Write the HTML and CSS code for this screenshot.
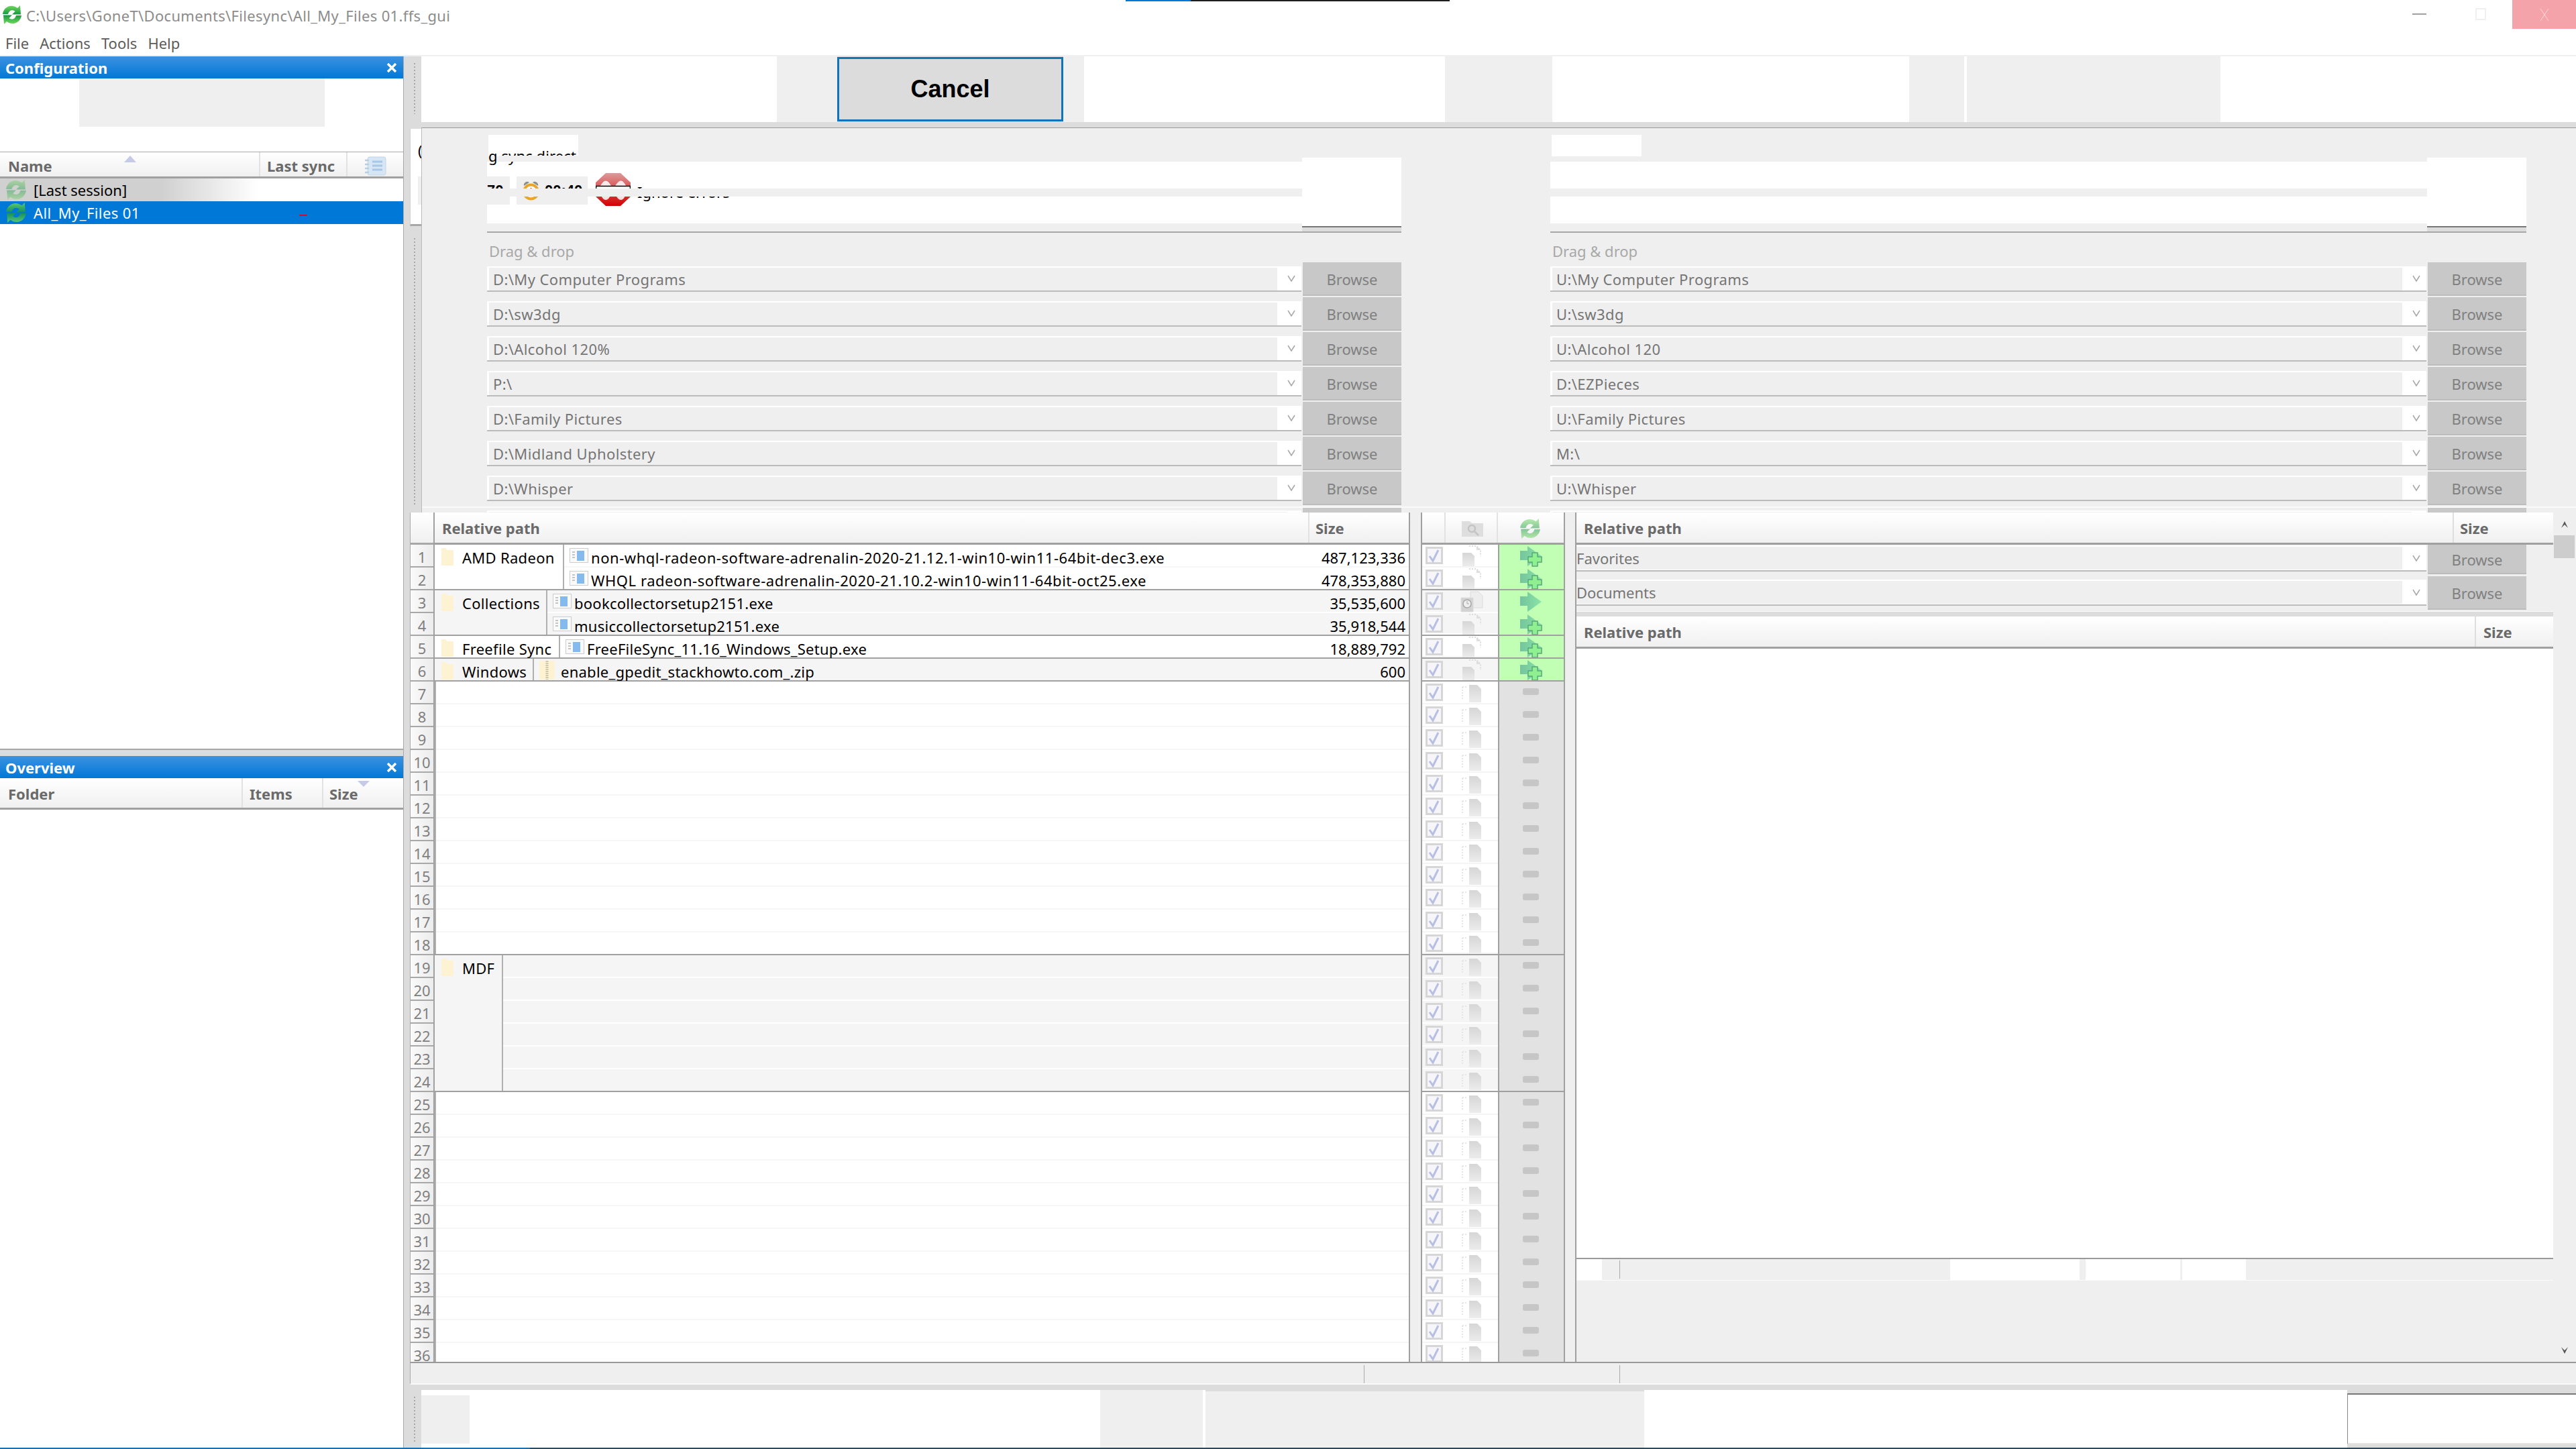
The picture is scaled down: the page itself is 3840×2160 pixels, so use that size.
FILE: index.html
```html
<!DOCTYPE html>
<html lang="en">
  <head>
    <meta charset="UTF-8" />
    <title>All_My_Files 01.ffs_gui</title>
    <link rel="stylesheet" href="styles.css">
  </head>

  <body>
    <svg class="defs" aria-hidden="true">
      <defs>
        <linearGradient id="g-sync" x1="0" y1="0" x2="0" y2="1"><stop offset="0" stop-color="#74dc5e"/><stop offset="1" stop-color="#17963f"/></linearGradient>
        <linearGradient id="g-arrow" x1="0" y1="0" x2="1" y2="0"><stop offset="0" stop-color="#74c49c"/><stop offset="1" stop-color="#8ae4a8"/></linearGradient>
        <linearGradient id="g-doc" x1="0" y1="0" x2="0" y2="1"><stop offset="0" stop-color="#d6d6d6"/><stop offset="1" stop-color="#ececec"/></linearGradient>
        <linearGradient id="g-stop" x1="0" y1="0" x2="0" y2="1"><stop offset="0" stop-color="#dc9a9a"/><stop offset="1" stop-color="#d40000"/></linearGradient>
      </defs>
      <symbol id="sync" viewBox="0 0 30 30">
        <path fill="url(#g-sync)" d="M1 14C2 6 9 1 16 2c3 .4 5 1.500 7 3l4-4 1 13.500H15l4.500-4.500c-4-3-9-2-10.500 4z"/>
        <path fill="url(#g-sync)" transform="rotate(180 15 15)" d="M1 14C2 6 9 1 16 2c3 .4 5 1.500 7 3l4-4 1 13.500H15l4.500-4.500c-4-3-9-2-10.500 4z"/>
      </symbol>
      <symbol id="check" viewBox="0 0 36 34">
        <rect x="6.500" y="4.500" width="23" height="23" fill="#f5f5fa" stroke="#d6d6d6" stroke-width="3"/>
        <path d="M11 17l5 7 8-16" fill="none" stroke="#b7bfe2" stroke-width="3"/>
      </symbol>
      <symbol id="act-new" viewBox="0 0 211 34">
        <use href="#check" width="36" height="34"/>
        <path d="M70 2h11l6 6v9" fill="none" stroke="#dcdcdc" stroke-dasharray="2 2" stroke-width="2"/>
        <path d="M81 2l6 6h-6z" fill="#dedede"/>
        <path d="M60 12h13l5 5v15H60z" fill="url(#g-doc)"/>
        <path d="M146 9h11V2l21 15-21 15v-9h-11z" fill="url(#g-arrow)"/>
        <path d="M164 12h8v6h6v8h-6v6h-8v-6h-6v-8h6z" fill="#8ff08f" stroke="#5aa77c" stroke-width="1.500"/>
      </symbol>
      <symbol id="act-upd" viewBox="0 0 211 34">
        <use href="#check" width="36" height="34"/>
        <path d="M72 2h12l6 6v18H72z" fill="#ededed" stroke="#dcdcdc"/>
        <path d="M58 11h18v21H58z" fill="#d2d2d2" stroke="#dedede"/>
        <circle cx="67" cy="20" r="6" fill="#eee" stroke="#a8a8a8" stroke-width="1.500"/>
        <path d="M67 16v4h3" fill="none" stroke="#a8a8a8"/>
        <path d="M146 9h11V2l21 15-21 15v-9h-11z" fill="url(#g-arrow)"/>
      </symbol>
      <symbol id="act-none" viewBox="0 0 211 34">
        <use href="#check" width="36" height="34"/>
        <path d="M60 8h8m-8 0v18" fill="none" stroke="#e6e6e6" stroke-dasharray="2 2" stroke-width="2"/>
        <path d="M70 5h12l6 6v20H70z" fill="url(#g-doc)"/>
        <rect x="150" y="10" width="24" height="10" rx="3" fill="#c6c6c6"/>
      </symbol>
      <symbol id="folder" viewBox="0 0 18 26">
        <path d="M0 0h6l3 3h9v23H0z" fill="#fdf3d2"/>
      </symbol>
      <symbol id="exe" viewBox="0 0 28 22">
        <rect x=".5" y=".5" width="27" height="21" fill="#fafafa" stroke="#cdcdcd"/>
        <rect x="11" y="4" width="11" height="15" fill="#84baee"/>
        <path d="M4 6h4M4 10h4M4 14h4" stroke="#c4c4c4" stroke-width="2"/>
      </symbol>
      <symbol id="zip" viewBox="0 0 23 28">
        <path d="M0 0h23v28H0z" fill="#fdf3d2"/>
        <path d="M11.500 0v28" stroke="#cfc8ac" stroke-width="4" stroke-dasharray="2 1"/>
      </symbol>
      <symbol id="panel-close" viewBox="0 0 16 14">
        <path d="M2 1l12 12M14 1L2 13" stroke="#fff" stroke-width="3.500" fill="none"/>
      </symbol>
      <symbol id="chevron" viewBox="0 0 14 12">
        <path d="M2 2l5 8 5-8" fill="none" stroke="#a8a8a8" stroke-width="1.500"/>
      </symbol>
    </svg>

    <header class="titlebar">
      <svg class="app-icon"><use href="#sync"/></svg>
      <span class="title-text">C:\Users\GoneT\Documents\Filesync\All_My_Files 01.ffs_gui</span>
      <div class="progress-mark"></div>
      <div class="win-min"></div>
      <div class="win-max"></div>
      <div class="win-close">
        <svg viewBox="0 0 14 18"><path d="M1 0l12 18M13 0L1 18" stroke="#fbd5d8" stroke-width="1" fill="none"/></svg>
      </div>
    </header>
    <nav class="menubar">
      <span>File</span>
      <span>Actions</span>
      <span>Tools</span>
      <span>Help</span>
    </nav>

    <div class="workspace">
      <aside class="side">
        <section class="config-panel">
          <div class="panel-title">Configuration<svg class="panel-x"><use href="#panel-close"/></svg></div>
          <div class="config-tools"><div class="config-chip"></div></div>
          <div class="side-head config-head">
            <div class="head-name">Name<i class="sort-up"></i></div>
            <div class="head-sync">Last sync</div>
            <div class="head-note">
              <svg viewBox="0 0 32 29" width="32" height="29">
                <rect x="4" y="1" width="27" height="27" rx="3" fill="#d6e6f4" stroke="#c2d6e6"/>
                <path d="M11 8h15M11 14h15M11 20h15" stroke="#a6c8e6" stroke-width="3"/>
                <path d="M0 6h6M0 12h6M0 18h6M0 24h6" stroke="#b8cfe2" stroke-width="2.500"/>
              </svg>
            </div>
          </div>
          <div class="cfg-row cfg-last"><svg class="cfg-icon cfg-faded"><use href="#sync"/></svg>[Last session]</div>
          <div class="cfg-row cfg-current"><svg class="cfg-icon cfg-soft"><use href="#sync"/></svg>All_My_Files 01<i class="red-dash"></i></div>
        </section>
        <section class="overview-panel">
          <div class="panel-title">Overview<svg class="panel-x"><use href="#panel-close"/></svg></div>
          <div class="side-head overview-head">
            <div class="head-folder">Folder</div>
            <div class="head-items">Items</div>
            <div class="head-size">Size<i class="sort-down"></i></div>
          </div>
        </section>
      </aside>

      <main class="main">
        <i class="dots dots-top"></i>
        <i class="dots dots-mid"></i>
        <i class="dots dots-bottom"></i>

        <div class="sliver">
          <span class="sliver-text">(</span>
          <div class="sliver-chip"></div>
        </div>

        <div class="toolbar">
          <div class="white"></div>
          <div class="gray"></div>
          <button class="cancel-btn">Cancel</button>
          <div class="gray"></div>
          <div class="white"></div>
          <div class="gray"></div>
          <div class="white"></div>
          <div class="gray"></div>
          <div class="white"></div>
          <div class="gray"></div>
          <div class="white"></div>
        </div>

        <div class="pairs">
          <div class="pair pair-left">
            <div class="tab">
              <span class="tab-text">g sync direct</span>
              <i class="tab-cover"></i>
            </div>
            <div class="pair-head">
              <div class="bands">
                <div class="band">
                  <div class="stat stat-count">70</div>
                  <div class="stat stat-time">
                    <svg viewBox="0 0 27 30" width="27" height="30">
                      <path d="M3 8a5 5 0 0 1 8-5zM24 8a5 5 0 0 0-8-5z" fill="#8d8d8d"/>
                      <circle cx="13.500" cy="17" r="10.500" fill="#fff" stroke="#e8a528" stroke-width="4"/>
                      <path d="M13.500 11v6l4 3" stroke="#c9503a" stroke-width="2" fill="none"/>
                    </svg>
                    00:40
                  </div>
                  <div class="stop-icon">
                    <svg viewBox="0 0 52 49" width="52" height="49">
                      <path d="M15 0h22l15 14v21L37 49H15L0 35V14z" fill="url(#g-stop)"/>
                      <path d="M6 21Q15 2 24 21h4Q38 2 46 21zM6 30Q15 50 24 30h4Q38 50 46 30z" fill="#fff" fill-opacity=".85"/>
                      <path d="M1 19.500h50v11H1z" fill="#fff"/>
                      <path d="M.5 35V19.500h51V35" fill="none" stroke="#000" stroke-width="1.500"/>
                    </svg>
                  </div>
                  <span class="ignore-text">Ignore errors</span>
                  <i class="band-cover"></i>
                </div>
              </div>
              <div class="side-box"></div>
            </div>
            <div class="drag-label">Drag &amp; drop</div>
            <div class="folder-row"><div class="combo"><div class="combo-text">D:\My Computer Programs</div><svg class="chev"><use href="#chevron"/></svg></div><button class="browse-btn">Browse</button></div>
            <div class="folder-row"><div class="combo"><div class="combo-text">D:\sw3dg</div><svg class="chev"><use href="#chevron"/></svg></div><button class="browse-btn">Browse</button></div>
            <div class="folder-row"><div class="combo"><div class="combo-text">D:\Alcohol 120%</div><svg class="chev"><use href="#chevron"/></svg></div><button class="browse-btn">Browse</button></div>
            <div class="folder-row"><div class="combo"><div class="combo-text">P:\</div><svg class="chev"><use href="#chevron"/></svg></div><button class="browse-btn">Browse</button></div>
            <div class="folder-row"><div class="combo"><div class="combo-text">D:\Family Pictures</div><svg class="chev"><use href="#chevron"/></svg></div><button class="browse-btn">Browse</button></div>
            <div class="folder-row"><div class="combo"><div class="combo-text">D:\Midland Upholstery</div><svg class="chev"><use href="#chevron"/></svg></div><button class="browse-btn">Browse</button></div>
            <div class="folder-row"><div class="combo"><div class="combo-text">D:\Whisper</div><svg class="chev"><use href="#chevron"/></svg></div><button class="browse-btn">Browse</button></div>
            <div class="folder-row"><div class="combo"><div class="combo-text"></div></div><button class="browse-btn"></button></div>
          </div>

          <div class="pair pair-right">
            <div class="tab"></div>
            <div class="pair-head">
              <div class="bands">
                <div class="band">
                  <i class="band-cover"></i>
                </div>
              </div>
              <div class="side-box"></div>
            </div>
            <div class="drag-label">Drag &amp; drop</div>
            <div class="folder-row"><div class="combo"><div class="combo-text">U:\My Computer Programs</div><svg class="chev"><use href="#chevron"/></svg></div><button class="browse-btn">Browse</button></div>
            <div class="folder-row"><div class="combo"><div class="combo-text">U:\sw3dg</div><svg class="chev"><use href="#chevron"/></svg></div><button class="browse-btn">Browse</button></div>
            <div class="folder-row"><div class="combo"><div class="combo-text">U:\Alcohol 120</div><svg class="chev"><use href="#chevron"/></svg></div><button class="browse-btn">Browse</button></div>
            <div class="folder-row"><div class="combo"><div class="combo-text">D:\EZPieces</div><svg class="chev"><use href="#chevron"/></svg></div><button class="browse-btn">Browse</button></div>
            <div class="folder-row"><div class="combo"><div class="combo-text">U:\Family Pictures</div><svg class="chev"><use href="#chevron"/></svg></div><button class="browse-btn">Browse</button></div>
            <div class="folder-row"><div class="combo"><div class="combo-text">M:\</div><svg class="chev"><use href="#chevron"/></svg></div><button class="browse-btn">Browse</button></div>
            <div class="folder-row"><div class="combo"><div class="combo-text">U:\Whisper</div><svg class="chev"><use href="#chevron"/></svg></div><button class="browse-btn">Browse</button></div>
            <div class="folder-row"><div class="combo"><div class="combo-text"></div></div><button class="browse-btn"></button></div>
          </div>
          <i class="pairs-rule"></i>
        </div>

        <div class="grids">
          <div class="left-grid">
            <div class="nums">
              <div class="nums-head"></div>
              <div>1</div><div>2</div><div>3</div><div>4</div><div>5</div><div>6</div>
              <div>7</div><div>8</div><div>9</div><div>10</div><div>11</div><div>12</div>
              <div>13</div><div>14</div><div>15</div><div>16</div><div>17</div><div>18</div>
              <div>19</div><div>20</div><div>21</div><div>22</div><div>23</div><div>24</div>
              <div>25</div><div>26</div><div>27</div><div>28</div><div>29</div><div>30</div>
              <div>31</div><div>32</div><div>33</div><div>34</div><div>35</div><div>36</div>
            </div>
            <div class="data">
              <div class="grid-head">
                <div class="hd hd-path">Relative path</div>
                <div class="hd hd-size">Size</div>
              </div>

              <div class="group">
                <div class="folder-cell amd"><svg class="folder-icon"><use href="#folder"/></svg>AMD Radeon</div>
                <div class="files">
                  <div class="file"><svg class="exe-icon"><use href="#exe"/></svg><span class="name name-wide">non-whql-radeon-software-adrenalin-2020-21.12.1-win10-win11-64bit-dec3.exe</span><span class="size">487,123,336</span></div>
                  <div class="file"><svg class="exe-icon"><use href="#exe"/></svg><span class="name name-wide">WHQL radeon-software-adrenalin-2020-21.10.2-win10-win11-64bit-oct25.exe</span><span class="size">478,353,880</span></div>
                </div>
              </div>
              <div class="group is-band">
                <div class="folder-cell collections"><svg class="folder-icon"><use href="#folder"/></svg>Collections</div>
                <div class="files">
                  <div class="file"><svg class="exe-icon"><use href="#exe"/></svg><span class="name">bookcollectorsetup2151.exe</span><span class="size">35,535,600</span></div>
                  <div class="file"><svg class="exe-icon"><use href="#exe"/></svg><span class="name">musiccollectorsetup2151.exe</span><span class="size">35,918,544</span></div>
                </div>
              </div>
              <div class="group">
                <div class="folder-cell freefile"><svg class="folder-icon"><use href="#folder"/></svg>Freefile Sync</div>
                <div class="files">
                  <div class="file"><svg class="exe-icon"><use href="#exe"/></svg><span class="name">FreeFileSync_11.16_Windows_Setup.exe</span><span class="size">18,889,792</span></div>
                </div>
              </div>
              <div class="group is-band">
                <div class="folder-cell windows"><svg class="folder-icon"><use href="#folder"/></svg>Windows</div>
                <div class="files">
                  <div class="file"><svg class="zip-icon"><use href="#zip"/></svg><span class="name">enable_gpedit_stackhowto.com_.zip</span><span class="size">600</span></div>
                </div>
              </div>
              <div class="group span-12"><div class="files"></div></div>
              <div class="group is-band span-6">
                <div class="folder-cell mdf"><svg class="folder-icon"><use href="#folder"/></svg>MDF</div>
                <div class="files"></div>
              </div>
              <div class="group span-12"><div class="files"></div></div>
            </div>
          </div>

          <div class="mid-grid">
            <div class="mid-head">
              <div class="mid-hd-check"></div>
              <div class="mid-hd-view">
                <svg viewBox="0 0 32 25" width="32" height="25">
                  <path d="M0 2h12l3 3h17v20H0z" fill="#dedede"/>
                  <circle cx="15" cy="13" r="5" fill="none" stroke="#c4c4c4" stroke-width="2.500"/>
                  <path d="M19 17l6 6" stroke="#c4c4c4" stroke-width="2.500"/>
                </svg>
              </div>
              <div class="mid-hd-sync"><svg class="mid-sync"><use href="#sync"/></svg></div>
            </div>
            <div class="act-row is-sync"><svg><use href="#act-new"/></svg></div>
            <div class="act-row is-sync is-end"><svg><use href="#act-new"/></svg></div>
            <div class="act-row is-sync is-band"><svg><use href="#act-upd"/></svg></div>
            <div class="act-row is-sync is-band is-end"><svg><use href="#act-new"/></svg></div>
            <div class="act-row is-sync is-end"><svg><use href="#act-new"/></svg></div>
            <div class="act-row is-sync is-band is-end"><svg><use href="#act-new"/></svg></div>
            <div class="act-row"><svg><use href="#act-none"/></svg></div>
            <div class="act-row"><svg><use href="#act-none"/></svg></div>
            <div class="act-row"><svg><use href="#act-none"/></svg></div>
            <div class="act-row"><svg><use href="#act-none"/></svg></div>
            <div class="act-row"><svg><use href="#act-none"/></svg></div>
            <div class="act-row"><svg><use href="#act-none"/></svg></div>
            <div class="act-row"><svg><use href="#act-none"/></svg></div>
            <div class="act-row"><svg><use href="#act-none"/></svg></div>
            <div class="act-row"><svg><use href="#act-none"/></svg></div>
            <div class="act-row"><svg><use href="#act-none"/></svg></div>
            <div class="act-row"><svg><use href="#act-none"/></svg></div>
            <div class="act-row is-end"><svg><use href="#act-none"/></svg></div>
            <div class="act-row is-band"><svg><use href="#act-none"/></svg></div>
            <div class="act-row is-band"><svg><use href="#act-none"/></svg></div>
            <div class="act-row is-band"><svg><use href="#act-none"/></svg></div>
            <div class="act-row is-band"><svg><use href="#act-none"/></svg></div>
            <div class="act-row is-band"><svg><use href="#act-none"/></svg></div>
            <div class="act-row is-band is-end"><svg><use href="#act-none"/></svg></div>
            <div class="act-row"><svg><use href="#act-none"/></svg></div>
            <div class="act-row"><svg><use href="#act-none"/></svg></div>
            <div class="act-row"><svg><use href="#act-none"/></svg></div>
            <div class="act-row"><svg><use href="#act-none"/></svg></div>
            <div class="act-row"><svg><use href="#act-none"/></svg></div>
            <div class="act-row"><svg><use href="#act-none"/></svg></div>
            <div class="act-row"><svg><use href="#act-none"/></svg></div>
            <div class="act-row"><svg><use href="#act-none"/></svg></div>
            <div class="act-row"><svg><use href="#act-none"/></svg></div>
            <div class="act-row"><svg><use href="#act-none"/></svg></div>
            <div class="act-row"><svg><use href="#act-none"/></svg></div>
            <div class="act-row"><svg><use href="#act-none"/></svg></div>
          </div>

          <div class="right-grid">
            <div class="grid-head">
              <div class="hd hd-path">Relative path</div>
              <div class="hd hd-size-r1">Size</div>
            </div>
            <div class="folder-row overlay-first"><div class="combo"><div class="combo-text">Favorites</div><svg class="chev"><use href="#chevron"/></svg></div><button class="browse-btn">Browse</button></div>
            <div class="folder-row overlay-second"><div class="combo"><div class="combo-text">Documents</div><svg class="chev"><use href="#chevron"/></svg></div><button class="browse-btn">Browse</button></div>
            <div class="overlay-band"></div>
            <div class="grid-head second-head">
              <div class="hd hd-path">Relative path</div>
              <div class="hd hd-size-r2">Size</div>
            </div>
            <div class="right-body"></div>
            <div class="right-status">
              <div class="rs-white"></div>
              <div class="rs-gray"><i class="rs-line"></i></div>
              <div class="rs-white"></div>
              <div class="rs-gray"></div>
              <div class="rs-white"></div>
              <div class="rs-white"></div>
              <div class="rs-gray"></div>
              <div class="rs-white"></div>
              <div class="rs-gray"></div>
            </div>
            <div class="right-rest"></div>
          </div>

          <div class="scrollbar">
            <svg class="scroll-arrow" viewBox="0 0 12 12"><path d="M1 11L6 1l5 10-5-5z" fill="#555"/></svg>
            <div class="scroll-thumb"></div>
            <svg class="scroll-arrow scroll-down" viewBox="0 0 12 12"><path d="M1 1l5 10 5-10-5 5z" fill="#555"/></svg>
          </div>
        </div>

        <div class="statusbar">
          <div class="status-a"></div>
          <div class="status-b"></div>
          <div class="status-c"></div>
        </div>

        <div class="lower-band"></div>

        <div class="bottombar">
          <div class="bb-white"><div class="bb-chip"></div></div>
          <div class="gray"></div>
          <div class="white"></div>
          <div class="gray bb-low"></div>
          <div class="white"></div>
          <div class="bb-box"></div>
        </div>
      </main>
    </div>
    <div class="strip"></div>
  </body>
</html>
```

FILE: styles.css
```css
* {
  box-sizing: border-box;
}

html,
body {
  margin: 0;
  width: 3840px;
  height: 2160px;
  overflow: hidden;
}

body {
  display: flex;
  flex-direction: column;
  background-color: #fff;
  font-family: "Noto Sans", "Open Sans", sans-serif;
  font-size: 22px;
  color: #000;
}

i {
  display: block;
}

.defs {
  position: absolute;
  width: 0;
  height: 0;
}

.white {
  background-color: #fff;
}

.gray {
  background-color: #efefef;
}

/* title + menu */
.titlebar {
  position: relative;
  display: flex;
  align-items: center;
  height: 44px;
  padding-left: 3px;
}

.app-icon {
  width: 30px;
  height: 30px;
}

.title-text {
  margin: 1px 0 0 6px;
  color: #8c8c8c;
  letter-spacing: 0.33px;
}

.progress-mark {
  position: absolute;
  left: 1678px;
  top: 0;
  width: 483px;
  height: 2px;
  background: linear-gradient(90deg, #0078d7 97px, #1e1e1e 97px);
}

.win-min {
  position: absolute;
  left: 3596px;
  top: 20px;
  width: 21px;
  height: 2px;
  background-color: #a0a0a0;
}

.win-max {
  position: absolute;
  left: 3690px;
  top: 12px;
  width: 16px;
  height: 18px;
  border: 2px solid #f0f0f0;
}

.win-close {
  position: absolute;
  left: 3745px;
  top: 0;
  display: flex;
  align-items: center;
  justify-content: center;
  width: 95px;
  height: 43px;
  background-color: #f5a3ab;
}

.win-close svg {
  width: 14px;
  height: 18px;
}

.menubar {
  display: flex;
  align-items: center;
  gap: 16px;
  height: 40px;
  padding: 1px 0 0 8px;
  color: #5c5c5c;
  border-bottom: 2px solid #f0f0f0;
}

/* left side */
.workspace {
  display: flex;
  height: 2074px;
}

.side {
  display: flex;
  flex-direction: column;
  width: 602px;
  background-color: #dcdcdc;
  border-right: 1px solid #a8a8a8;
}

.panel-title {
  display: flex;
  align-items: center;
  justify-content: space-between;
  height: 33px;
  padding: 0 9px 0 8px;
  background: linear-gradient(#3c91e0, #0078d7);
  color: #fff;
  font-weight: 700;
}

.panel-x {
  width: 16px;
  height: 14px;
}

.config-panel {
  height: 1034px;
  background-color: #fff;
  border-bottom: 2px solid #a8a8a8;
}

.config-tools {
  height: 109px;
  padding-left: 118px;
}

.config-chip {
  width: 366px;
  height: 72px;
  background-color: #efefef;
}

.side-head {
  display: flex;
  background: linear-gradient(#fff, #f0f0f0);
  color: #6a6a6a;
  font-weight: 700;
  border-bottom: 3px solid #a0a0a0;
}

.config-head {
  height: 40px;
  border-top: 1px solid #a8a8a8;
}

.head-name {
  position: relative;
  width: 386px;
  padding: 5px 0 0 12px;
}

.sort-up {
  position: absolute;
  left: 185px;
  top: 5px;
  border: 9px solid transparent;
  border-top: 0;
  border-bottom: 10px solid #c5cbe6;
}

.head-sync {
  width: 130px;
  padding: 5px 0 0 10px;
  border-left: 2px solid #e2e2e2;
}

.head-note {
  flex: 1;
  padding: 6px 0 0 26px;
  border-left: 2px solid #e2e2e2;
}

.cfg-row {
  position: relative;
  display: flex;
  align-items: center;
  height: 34px;
  padding-left: 8px;
}

.cfg-icon {
  width: 32px;
  height: 32px;
  margin-right: 10px;
}

.cfg-faded {
  opacity: 0.4;
}

.cfg-soft {
  opacity: 0.8;
}

.cfg-last {
  background: linear-gradient(90deg, #d0d0d0 40%, #fff 64%);
}

.cfg-current {
  background-color: #0078d7;
  color: #fff;
  letter-spacing: 0.4px;
}

.red-dash {
  position: absolute;
  left: 446px;
  top: 20px;
  width: 12px;
  height: 2px;
  background-color: #c8102e;
}

.overview-panel {
  flex: 1;
  margin-top: 9px;
  background-color: #fff;
}

.overview-head {
  height: 47px;
  padding-top: 8px;
}

.head-folder {
  width: 360px;
  padding-left: 12px;
}

.head-items {
  width: 120px;
  padding-left: 10px;
  border-left: 2px solid #e2e2e2;
  margin-top: -8px;
  padding-top: 8px;
}

.head-size {
  position: relative;
  flex: 1;
  padding-left: 9px;
  border-left: 2px solid #e2e2e2;
  margin-top: -8px;
  padding-top: 8px;
}

.sort-down {
  position: absolute;
  left: 51px;
  top: 4px;
  border: 9px solid transparent;
  border-bottom: 0;
  border-top: 9px solid #c5cbe6;
}

/* main */
.main {
  position: relative;
  flex: 1;
  display: flex;
  flex-direction: column;
  background-color: #dcdcdc;
}

.dots {
  position: absolute;
  left: 15px;
  width: 2px;
  background: repeating-linear-gradient(#a8a8a8 0 2px, transparent 2px 5px);
}

.dots-top {
  top: 10px;
  height: 76px;
}

.dots-mid {
  top: 271px;
  height: 400px;
}

.dots-bottom {
  top: 1998px;
  height: 68px;
}

.sliver {
  position: absolute;
  left: 9px;
  top: 108px;
  width: 17px;
  height: 145px;
  background-color: #fff;
  border-left: 1px solid #d0d0d0;
  border-bottom: 3px solid #a8a8a8;
}

.sliver-text {
  position: absolute;
  left: 11px;
  top: 17px;
}

.sliver-chip {
  position: absolute;
  left: 11px;
  top: 71px;
  width: 5px;
  height: 42px;
  background-color: #efefef;
}

.toolbar {
  display: grid;
  grid-template-columns: 530px 90px 337px 31px 538px 160px 532px 82px 4px 378px 1fr;
  height: 98px;
  margin-left: 26px;
}

.cancel-btn {
  margin: 1px 0;
  background-color: #dcdcdc;
  border: 3px solid #1273b8;
  font-family: "Liberation Sans", sans-serif;
  font-size: 36px;
  font-weight: 700;
  color: #000;
}

.pairs {
  position: relative;
  display: flex;
  gap: 222px;
  height: 574px;
  margin: 8px 0 0 26px;
  padding-left: 97px;
  overflow: hidden;
  background-color: #efefef;
  border-top: 1px solid #999;
  border-left: 1px solid #bbb;
}

.pairs-rule {
  position: absolute;
  left: 0;
  right: 0;
  top: 564px;
  height: 2px;
  background-color: #fafafa;
}

.pair {
  flex-shrink: 0;
}

.pair-left {
  width: 1363px;
}

.pair-right {
  width: 1455px;
}

.tab {
  position: relative;
  z-index: 2;
  width: 134px;
  height: 32px;
  margin: 10px 0 0 2px;
  background-color: #fff;
}

.tab-text {
  position: absolute;
  left: 0;
  top: 16px;
  white-space: nowrap;
  letter-spacing: 0.1px;
}

.tab-cover {
  position: absolute;
  left: 16px;
  right: 0;
  top: 31px;
  height: 9px;
  background-color: #efefef;
}

.pair-head {
  display: flex;
  height: 112px;
  margin-top: 2px;
  border-bottom: 2px solid #a8a8a8;
}

.bands {
  flex: 1;
  padding-top: 6px;
}

.band {
  position: relative;
  display: flex;
  height: 92px;
  padding-top: 22px;
  background-color: #fff;
}

.band-cover {
  position: absolute;
  left: 0;
  right: 0;
  top: 40px;
  height: 12px;
  background-color: #efefef;
}

.stat {
  display: flex;
  align-items: center;
  height: 42px;
  background-color: #efefef;
  font-family: "Liberation Sans", sans-serif;
  font-weight: 700;
  white-space: nowrap;
}

.stat-count {
  width: 34px;
}

.stat-time {
  gap: 7px;
  width: 106px;
  margin-left: 10px;
  padding-left: 8px;
}

.stop-icon {
  width: 52px;
  height: 49px;
  margin: -5px 0 0 12px;
}

.ignore-text {
  margin: 8px 0 0 10px;
}

.side-box {
  width: 148px;
  background-color: #dcdcdc;
}

.side-box::before {
  content: "";
  display: block;
  height: 102px;
  background-color: #fff;
  border-bottom: 2px solid #777;
}

.drag-label {
  height: 44px;
  padding: 12px 0 0 3px;
  color: #a8a8a8;
}

.folder-row {
  display: flex;
  height: 52px;
}

.combo {
  flex: 1;
  display: flex;
  align-items: center;
  justify-content: space-between;
  height: 38px;
  margin-top: 6px;
  padding-right: 8px;
  background-color: #fff;
  border-bottom: 2px solid #bbb;
}

.combo-text {
  flex: 1;
  align-self: flex-start;
  height: 34px;
  margin: 2px 14px 0 3px;
  padding-left: 6px;
  line-height: 35px;
  background-color: #efefef;
  color: #757575;
  letter-spacing: 0.4px;
}

.chev {
  width: 14px;
  height: 12px;
}

.browse-btn {
  width: 147px;
  height: 50px;
  margin-left: 2px;
  padding: 2px 0 0;
  background-color: #c8c8c8;
  border: 0;
  border-bottom: 2px solid #bcbcbc;
  font-family: inherit;
  font-size: 22px;
  color: #808080;
}

/* grids */
.grids {
  display: flex;
  height: 1266px;
  margin-left: 9px;
  overflow: hidden;
  background-color: #efefef;
}

.left-grid {
  display: flex;
  flex-shrink: 0;
  width: 1491px;
  margin-right: 16px;
  border-left: 1px solid #aaa;
  border-right: 2px solid #a0a0a0;
  background-color: #fff;
}

.nums {
  flex-shrink: 0;
  width: 36px;
  border-right: 2px solid #a0a0a0;
  background: linear-gradient(90deg, #fafafa, #ececec);
  color: #808080;
  text-align: center;
}

.nums div {
  height: 34px;
  line-height: 37px;
  border-bottom: 2px solid #a8a8a8;
}

.nums .nums-head {
  height: 48px;
  background: linear-gradient(#fff, #f0f0f0);
  border-bottom-width: 3px;
}

.data {
  flex: 1;
  min-width: 0;
}

.grid-head {
  display: flex;
  height: 48px;
  background: linear-gradient(#fff, #f0f0f0);
  border-bottom: 3px solid #a0a0a0;
  color: #6a6a6a;
  font-weight: 700;
}

.hd {
  padding-top: 8px;
}

.hd-path {
  flex: 1;
  padding-left: 11px;
}

.hd-size {
  width: 150px;
  padding-left: 9px;
  border-left: 2px solid #e2e2e2;
}

.hd-size-r1 {
  width: 150px;
  padding-left: 9px;
  border-left: 2px solid #dedede;
}

.hd-size-r2 {
  width: 117px;
  padding-left: 11px;
  border-left: 2px solid #dedede;
}

.group {
  display: flex;
  background-color: #fff;
  border-bottom: 2px solid #a0a0a0;
}

.group.is-band {
  background-color: #f5f5f5;
}

.span-12 {
  height: 408px;
}

.span-6 {
  height: 204px;
}

.folder-cell {
  display: flex;
  flex-shrink: 0;
  height: 32px;
  padding-left: 10px;
  line-height: 38px;
  white-space: nowrap;
  letter-spacing: 0.3px;
}

.folder-icon {
  flex-shrink: 0;
  width: 18px;
  height: 26px;
  margin: 5px 13px 0 0;
}

.amd {
  width: 191px;
}

.collections {
  width: 166px;
}

.freefile {
  width: 185px;
}

.windows {
  width: 146px;
}

.mdf {
  width: 100px;
}

.files {
  flex: 1;
  min-width: 0;
  border-left: 2px solid #b0b0b0;
  background: repeating-linear-gradient(#fff 0 32px, #f6f6f6 32px 34px);
}

.is-band .files {
  background: repeating-linear-gradient(#f5f5f5 0 32px, #fff 32px 34px);
}

.file {
  display: flex;
  height: 34px;
  padding: 0 5px 0 8px;
  line-height: 38px;
  white-space: nowrap;
}

.file:last-child {
  height: 32px;
}

.exe-icon {
  flex-shrink: 0;
  width: 28px;
  height: 22px;
  margin: 5px 4px 0 0;
}

.zip-icon {
  flex-shrink: 0;
  width: 23px;
  height: 28px;
  margin: 3px 9px 0 0;
}

.name {
  flex: 1;
  letter-spacing: 0.25px;
}

.name-wide {
  letter-spacing: 0.55px;
}

.mid-grid {
  flex-shrink: 0;
  width: 215px;
  margin-right: 15px;
  background-color: #fff;
  border-left: 2px solid #a0a0a0;
  border-right: 2px solid #a0a0a0;
}

.mid-head {
  display: flex;
  height: 48px;
  background: linear-gradient(#fff, #f0f0f0);
  border-bottom: 3px solid #a0a0a0;
}

.mid-hd-check {
  width: 35px;
  border-right: 2px solid #e2e2e2;
}

.mid-hd-view {
  width: 78px;
  padding: 11px 0 0 24px;
  border-right: 2px solid #e2e2e2;
}

.mid-hd-sync {
  flex: 1;
  padding: 8px 0 0 32px;
}

.mid-sync {
  width: 32px;
  height: 32px;
  opacity: 0.5;
}

.act-row {
  --band: #fff;
  --rule: #f4f4f4;
  --sync: #e2e2e2;
  height: 34px;
  overflow: hidden;
  background:
    linear-gradient(var(--rule), var(--rule)) left bottom / 113px 2px no-repeat,
    linear-gradient(90deg, var(--band) 113px, #a0a0a0 113px, #a0a0a0 115px, var(--sync) 115px);
}

.act-row svg {
  display: block;
  width: 211px;
  height: 34px;
}

.act-row.is-band {
  --band: #f5f5f5;
  --rule: #fff;
}

.act-row.is-sync {
  --sync: #c0ffb4;
}

.act-row.is-end {
  border-bottom: 2px solid #a0a0a0;
}

.right-grid {
  display: flex;
  flex-direction: column;
  flex-shrink: 0;
  width: 1458px;
  border-left: 2px solid #a0a0a0;
}

.overlay-first {
  height: 47px;
}

.overlay-first .combo,
.overlay-second .combo {
  height: 39px;
}

.overlay-first .combo {
  margin-top: 1px;
}

.overlay-first .browse-btn {
  width: 147px;
  height: 44px;
  margin-right: 40px;
}

.overlay-second {
  height: 52px;
}

.overlay-second .combo {
  margin-top: 5px;
}

.overlay-second .browse-btn {
  width: 147px;
  height: 50px;
  margin-right: 40px;
}

.overlay-first .combo-text,
.overlay-second .combo-text {
  margin-left: 0;
  padding-left: 0;
  letter-spacing: 0;
}

.overlay-band {
  height: 8px;
  background-color: #dcdcdc;
  border-top: 1px solid #fafafa;
}

.second-head {
  height: 48px;
}

.right-body {
  flex: 1;
  background-color: #fff;
}

.right-status {
  display: grid;
  grid-template-columns: 38px 519px 193px 9px 32px 109px 3px 95px 1fr;
  height: 33px;
  background-color: #fff;
  border-top: 2px solid #999;
}

.rs-white {
  background-color: #fff;
}

.rs-gray {
  position: relative;
  background-color: #efefef;
}

.rs-line {
  position: absolute;
  left: 26px;
  top: 2px;
  bottom: 2px;
  width: 1px;
  background-color: #aaa;
}

.right-rest {
  height: 122px;
  background-color: #efefef;
  border-top: 1px solid #fafafa;
}

.scrollbar {
  position: relative;
  flex: 1;
  padding-top: 34px;
}

.scroll-arrow {
  position: absolute;
  left: 11px;
  top: 12px;
  width: 12px;
  height: 12px;
}

.scroll-down {
  top: 1243px;
}

.scroll-thumb {
  width: 31px;
  height: 34px;
  margin-left: 1px;
  background-color: #cdcdcd;
}

.statusbar {
  display: flex;
  height: 34px;
  margin-left: 9px;
  padding-top: 3px;
  background-color: #efefef;
  border-top: 2px solid #999;
  border-bottom: 2px solid #fafafa;
  border-left: 1px solid #aaa;
}

.status-a {
  width: 1422px;
  border-right: 1px solid #aaa;
}

.status-b {
  width: 381px;
  border-right: 1px solid #aaa;
}

.lower-band {
  height: 8px;
}

.bottombar {
  display: grid;
  grid-template-columns: 1012px 153px 4px 654px 1048px 1fr;
  height: 86px;
  margin-left: 26px;
}

.bb-white {
  padding-top: 8px;
  background-color: #fff;
}

.bb-chip {
  width: 72px;
  height: 72px;
  background-color: #efefef;
}

.bb-low {
  margin-top: 2px;
}

.bb-box {
  margin: 5px 0;
  background-color: #fff;
  border-top: 2px solid #777;
  border-left: 1px solid #888;
  border-bottom: 2px solid #e4e4e4;
}

.strip {
  height: 2px;
  background: linear-gradient(90deg, #1c6ea4 790px, #2a4a60 790px);
}
```
